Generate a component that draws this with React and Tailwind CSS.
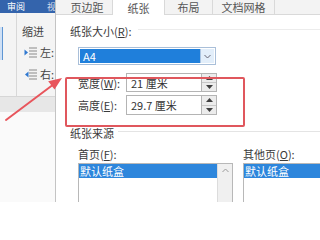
import React from "react";

function IndentIcon({ right }) {
  return (
    <svg width="13" height="11" viewBox="0 0 13 11">
      <rect x="5" y="0.5" width="8" height="1" fill="#8a8a8a" />
      <rect x="5" y="3.5" width="8" height="1" fill="#8a8a8a" />
      <rect x="5" y="6.5" width="8" height="1" fill="#8a8a8a" />
      <rect x="5" y="9.5" width="8" height="1" fill="#8a8a8a" />
      {right ? (
        <polygon points="4.5,2.5 1,5.5 4.5,8.5" fill="#2f78d0" />
      ) : (
        <polygon points="0.5,2.5 4,5.5 0.5,8.5" fill="#2f78d0" />
      )}
    </svg>
  );
}

function Spin({ value }) {
  return (
    <div className="flex h-full">
      <div className="w-[76px] h-full border border-[#b4b4b4] bg-white flex items-center pl-[4px] text-[11px] leading-[14px] text-[#333]">
        {value}
      </div>
      <div className="w-[15px] h-full flex flex-col border border-l-0 border-[#b4b4b4]">
        <div className="flex-1 bg-[#ececec] border-b border-[#c8c8c8] flex items-center justify-center">
          <svg width="7" height="4" viewBox="0 0 7 4"><polygon points="0,4 3.5,0 7,4" fill="#404040" /></svg>
        </div>
        <div className="flex-1 bg-[#ececec] flex items-center justify-center">
          <svg width="7" height="4" viewBox="0 0 7 4"><polygon points="0,0 3.5,4 7,0" fill="#404040" /></svg>
        </div>
      </div>
    </div>
  );
}

export default function App() {
  return (
    <div className="relative w-[320px] h-[240px] bg-white overflow-hidden font-['Noto_Sans_CJK_SC','Liberation_Sans',sans-serif] text-[#3a3a3a]">
      <div className="flex h-[202px] overflow-hidden">
        {/* Word ribbon fragment */}
        <div className="w-[55px] shrink-0 flex flex-col overflow-hidden">
          <div className="h-[13px] bg-[#3464ac] flex items-center text-white text-[9px] leading-[13px] whitespace-nowrap">
            <span className="ml-[7px]">审阅</span>
            <span className="ml-[22px] opacity-80">视</span>
          </div>
          <div className="h-[84px] bg-[#f4f4f4] border-b border-[#d6d6d6] flex">
            <div className="w-[17px] border-r border-[#d8d8d8] pt-[14px]">
              <div className="w-[3px] h-[33px] bg-[#cfe0f5] border-r border-[#5f96d3]" />
            </div>
            <div className="flex flex-col pl-[5px] pt-[11px]">
              <div className="text-[11px] leading-[14px] text-[#444]">缩进</div>
              <div className="flex items-center mt-[7px] h-[14px] pl-[2px] gap-[3px]">
                <IndentIcon />
                <span className="text-[11px] leading-[14px] text-[#444]">左:</span>
              </div>
              <div className="flex items-center mt-[8px] h-[14px] pl-[2px] gap-[3px]">
                <IndentIcon right />
                <span className="text-[11px] leading-[14px] text-[#444]">右:</span>
              </div>
            </div>
          </div>
          <div className="h-[15px] bg-[#e7e7e7]" />
          <div className="flex-1 bg-[#fafafa]" />
        </div>

        {/* Dialog */}
        <div className="flex-1 border-l border-[#c4c4c4] bg-white flex flex-col">
          <div className="h-[18px] bg-[#f3f3f3] flex items-stretch text-[11px] leading-[14px]">
            <div className="w-[57px] flex items-center justify-center border-b border-r border-[#d9d9d9] text-[#555] pl-[6px]">页边距</div>
            <div className="w-[52px] flex items-center justify-center bg-white border-r border-[#d9d9d9] text-[#555]">纸张</div>
            <div className="w-[48px] flex items-center justify-center border-b border-r border-[#d9d9d9] text-[#555]">布局</div>
            <div className="w-[62px] flex items-center justify-center border-b border-r border-[#d9d9d9] text-[#555]">文档网格</div>
            <div className="flex-1 border-b border-[#d9d9d9]" />
          </div>

          <div className="flex flex-col pl-[14px]">
            <div className="mt-[9px] flex items-center h-[14px]">
              <span className="text-[11px] leading-[14px]">纸张大小(<span className="underline">R</span>):</span>
              <div className="flex-1 h-px bg-[#ececec] ml-[6px] mt-[-3px]" />
            </div>

            <div className="ml-[8px] mt-[9px] w-[138px] h-[18px] border border-[#a9bfd9] bg-white flex p-[1px]">
              <div className="flex-1 bg-[#1f7fdb] flex items-center pl-[3px] text-white text-[11px] leading-[14px]">A4</div>
              <div className="w-[14px] bg-[#e2eefa] border-l border-[#a9c4e2] flex items-center justify-center">
                <svg width="7" height="5" viewBox="0 0 7 5"><polyline points="0.5,1 3.5,4 6.5,1" fill="none" stroke="#667" strokeWidth="1" /></svg>
              </div>
            </div>

            <div className="ml-[8px] mt-[8px] flex items-center h-[19px]">
              <span className="w-[48px] text-[11px] leading-[14px]">宽度(<span className="underline">W</span>):</span>
              <Spin value="21 厘米" />
            </div>
            <div className="ml-[8px] mt-[3px] flex items-center h-[20px]">
              <span className="w-[48px] text-[11px] leading-[14px]">高度(<span className="underline">E</span>):</span>
              <Spin value="29.7 厘米" />
            </div>

            <div className="mt-[11px] flex items-center h-[14px]">
              <span className="text-[11px] leading-[14px]">纸张来源</span>
              <div className="flex-1 h-px bg-[#e4e4e4] ml-[4px] mt-[-4px]" />
            </div>

            <div className="mt-[7px] flex ml-[8px]">
              <div className="w-[155px] flex flex-col">
                <span className="text-[11px] leading-[14px] h-[14px]">首页(<span className="underline">F</span>):</span>
                <div className="mt-[2px] h-[44px] border border-[#b8b8b8] bg-white flex">
                  <div className="flex-1">
                    <div className="h-[14px] bg-[#2d86dc] text-white text-[11px] leading-[14px] pl-[1px]">默认纸盒</div>
                  </div>
                  <div className="w-[15px] bg-[#f0f0f0] border-l border-[#dcdcdc] flex justify-center pt-[4px]">
                    <svg width="7" height="5" viewBox="0 0 7 5"><polyline points="0.5,4 3.5,1 6.5,4" fill="none" stroke="#9a9a9a" strokeWidth="1" /></svg>
                  </div>
                </div>
              </div>
              <div className="ml-[10px] flex-1 flex flex-col">
                <span className="text-[11px] leading-[14px] h-[14px]">其他页(<span className="underline">O</span>):</span>
                <div className="mt-[2px] h-[44px] border border-r-0 border-[#b8b8b8] bg-white">
                  <div className="h-[14px] bg-[#2d86dc] text-white text-[11px] leading-[14px] pl-[1px]">默认纸盒</div>
                </div>
              </div>
            </div>
          </div>
        </div>
      </div>

      {/* annotation: red box */}
      <div className="absolute left-[65px] top-[77px] w-[180px] h-[50px] border-2 border-[#e0575d] rounded-[2px]" />
      {/* annotation: arrow */}
      <svg className="absolute left-0 top-0" width="320" height="240" viewBox="0 0 320 240">
        <line x1="6" y1="120" x2="54" y2="84" stroke="#e8555c" strokeWidth="2" strokeLinecap="round" />
        <polygon points="62,78 54.5,89.5 48.2,81.3" fill="#e8555c" />
      </svg>
    </div>
  );
}
